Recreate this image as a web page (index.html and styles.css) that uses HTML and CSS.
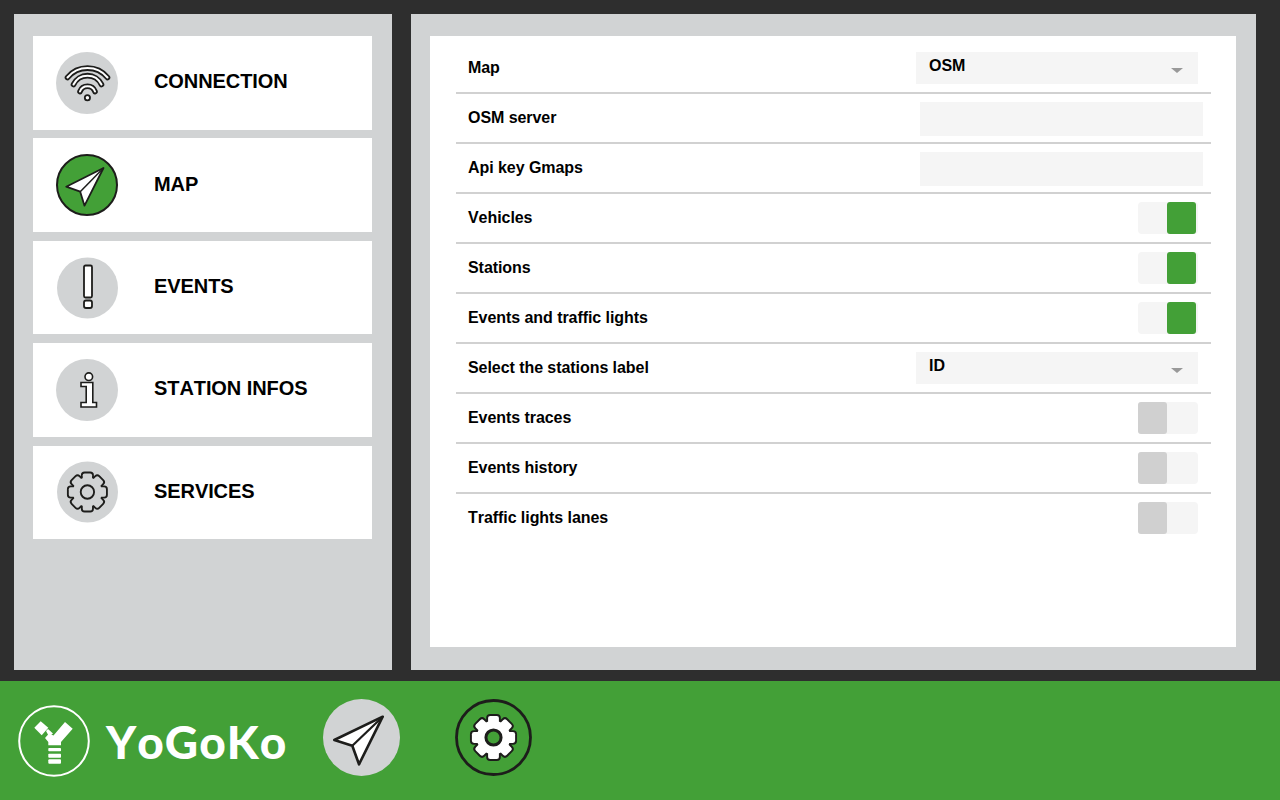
FILE: index.html
```html
<!DOCTYPE html>
<html lang="en">
  <head>
    <meta charset="UTF-8" />
    <meta name="viewport" content="width=device-width, initial-scale=1.0" />
    <title>YoGoKo settings</title>
    <link rel="stylesheet" href="styles.css">
  </head>
  <body>
    <svg class="defs" width="0" height="0">
      <defs>
        <g id="gear">
          <circle r="15.5" />
          <rect x="-5" y="-20" width="10" height="10" rx="2" />
          <rect x="-5" y="-20" width="10" height="10" rx="2" transform="rotate(45)" />
          <rect x="-5" y="-20" width="10" height="10" rx="2" transform="rotate(90)" />
          <rect x="-5" y="-20" width="10" height="10" rx="2" transform="rotate(135)" />
          <rect x="-5" y="-20" width="10" height="10" rx="2" transform="rotate(180)" />
          <rect x="-5" y="-20" width="10" height="10" rx="2" transform="rotate(225)" />
          <rect x="-5" y="-20" width="10" height="10" rx="2" transform="rotate(270)" />
          <rect x="-5" y="-20" width="10" height="10" rx="2" transform="rotate(315)" />
        </g>
      </defs>
    </svg>

    <main class="content">
      <nav class="sidebar">
        <a class="nav-item">
          <svg class="nav-icon" viewBox="0 0 62 62">
            <circle cx="31" cy="31" r="31" fill="#d1d3d4" />
            <g fill="none" stroke="#1d1d1b" stroke-width="5.6" stroke-linecap="round">
              <path d="M11.5 25.5A26 26 0 0 1 51.5 25.5" />
              <path d="M17.5 32.5A15.5 15.5 0 0 1 45.5 32.5" />
              <path d="M24 39.5A8 8 0 0 1 39 39.5" />
            </g>
            <g fill="none" stroke="#fff" stroke-width="2" stroke-linecap="round">
              <path d="M11.5 25.5A26 26 0 0 1 51.5 25.5" />
              <path d="M17.5 32.5A15.5 15.5 0 0 1 45.5 32.5" />
              <path d="M24 39.5A8 8 0 0 1 39 39.5" />
            </g>
            <circle cx="31.4" cy="45.7" r="2.6" fill="#fff" stroke="#1d1d1b" stroke-width="1.8" />
          </svg>
          <span>CONNECTION</span>
        </a>
        <a class="nav-item">
          <svg class="nav-icon" viewBox="0 0 62 62">
            <circle cx="31" cy="31" r="30" fill="#43a037" stroke="#1d1d1b" stroke-width="2" />
            <path d="M47.5 14L10.2 32.7L24.2 37.7L28.5 51.7Z" fill="#fff" stroke="#1d1d1b" stroke-width="1.8" stroke-linejoin="round" />
            <path d="M47.5 14L24.2 37.7" fill="none" stroke="#1d1d1b" stroke-width="1.5" />
          </svg>
          <span>MAP</span>
        </a>
        <a class="nav-item">
          <svg class="nav-icon" viewBox="0 0 62 62">
            <circle cx="31.5" cy="31" r="30.5" fill="#d1d3d4" />
            <rect x="28" y="8.5" width="8" height="32" rx="1.5" fill="#fff" stroke="#1d1d1b" stroke-width="1.8" />
            <rect x="28" y="43.5" width="8" height="7.5" rx="2" fill="#fff" stroke="#1d1d1b" stroke-width="1.8" />
          </svg>
          <span>EVENTS</span>
        </a>
        <a class="nav-item">
          <svg class="nav-icon" viewBox="0 0 62 62">
            <circle cx="31" cy="31" r="31" fill="#d1d3d4" />
            <circle cx="32.8" cy="17.7" r="3.8" fill="#fff" stroke="#1d1d1b" stroke-width="1.6" />
            <path d="M25 23.5H36.8V43.5H40.5V48H25V43.5H30.2V27.5H25Z" fill="#fff" stroke="#1d1d1b" stroke-width="1.6" />
          </svg>
          <span>STATION INFOS</span>
        </a>
        <a class="nav-item">
          <svg class="nav-icon" viewBox="0 0 62 62">
            <circle cx="31.5" cy="31" r="30.5" fill="#d1d3d4" />
            <g transform="translate(31.4 31) scale(0.93)">
              <use href="#gear" fill="#1d1d1b" stroke="#1d1d1b" stroke-width="4" />
              <use href="#gear" fill="#d1d3d4" />
              <circle r="7.2" fill="#d1d3d4" stroke="#1d1d1b" stroke-width="2" />
            </g>
          </svg>
          <span>SERVICES</span>
        </a>
      </nav>

      <section class="settings">
        <div class="settings-list">
          <div class="row">
            <span>Map</span>
            <div class="select"><span>OSM</span><i class="caret"></i></div>
          </div>
          <div class="row">
            <span>OSM server</span>
            <div class="input"></div>
          </div>
          <div class="row">
            <span>Api key Gmaps</span>
            <div class="input"></div>
          </div>
          <div class="row">
            <span>Vehicles</span>
            <div class="toggle on"><i class="thumb"></i></div>
          </div>
          <div class="row">
            <span>Stations</span>
            <div class="toggle on"><i class="thumb"></i></div>
          </div>
          <div class="row">
            <span>Events and traffic lights</span>
            <div class="toggle on"><i class="thumb"></i></div>
          </div>
          <div class="row">
            <span>Select the stations label</span>
            <div class="select"><span>ID</span><i class="caret"></i></div>
          </div>
          <div class="row">
            <span>Events traces</span>
            <div class="toggle"><i class="thumb"></i></div>
          </div>
          <div class="row">
            <span>Events history</span>
            <div class="toggle"><i class="thumb"></i></div>
          </div>
          <div class="row">
            <span>Traffic lights lanes</span>
            <div class="toggle"><i class="thumb"></i></div>
          </div>
        </div>
      </section>
    </main>

    <footer class="footer">
      <div class="brand">
        <svg class="brand-mark" viewBox="0 0 72 72">
          <circle cx="36" cy="36" r="34.8" fill="none" stroke="#fff" stroke-width="2" />
          <path d="M22.7 16.3L30.3 22.7L23.7 30.3L16.3 22.7Z" fill="#fff" />
          <path d="M28 26L30 24L35 28.5L31 31.5Z" fill="#fff" />
          <path d="M47 17L54.7 23.7L43 37V40.3H30.3V37L27 33L31 28.5L35.5 30.5Z" fill="#fff" />
          <rect x="30.3" y="43" width="12.7" height="3.3" rx="0.8" fill="#fff" />
          <rect x="30.3" y="48.7" width="12.7" height="4" rx="0.8" fill="#fff" />
          <rect x="30.3" y="54.3" width="12.7" height="4.4" rx="1" fill="#fff" />
        </svg>
        <span class="brand-name">YoGoKo</span>
      </div>
      <svg class="footer-icon plane" viewBox="0 0 77 77">
        <circle cx="38.5" cy="38.5" r="38.5" fill="#d1d3d4" />
        <path d="M59.7 17.7L11.3 41L29.3 46.7L36 65.3Z" fill="#fff" stroke="#1d1d1b" stroke-width="2.6" stroke-linejoin="round" />
        <path d="M59.7 17.7L29.3 46.7" fill="none" stroke="#1d1d1b" stroke-width="2.2" />
      </svg>
      <svg class="footer-icon cog" viewBox="0 0 77 77">
        <circle cx="38.5" cy="38.5" r="37" fill="none" stroke="#1d1d1b" stroke-width="2.8" />
        <g transform="translate(38.5 38.5) scale(1.08)">
          <use href="#gear" fill="#1d1d1b" stroke="#1d1d1b" stroke-width="3.6" />
          <use href="#gear" fill="#fff" />
          <circle r="7" fill="#43a037" stroke="#1d1d1b" stroke-width="2.8" />
        </g>
      </svg>
    </footer>
  </body>
</html>
```

FILE: styles.css
```css
* {
  box-sizing: border-box;
}
body {
  margin: 0;
  height: 800px;
  display: flex;
  flex-flow: column nowrap;
  background-color: #2e2e2e;
  font-family: "Liberation Sans", Arial, sans-serif;
  font-kerning: none;
  color: #000;
}
.defs {
  position: absolute;
}
.content {
  display: flex;
  height: 681px;
  padding: 14px 24px 11px 14px;
  gap: 19px;
}
.sidebar {
  display: flex;
  flex-flow: column nowrap;
  width: 378px;
  padding: 22px 20px 0 19px;
  gap: 8.9px;
  background-color: #d1d3d4;
}
.nav-item {
  display: flex;
  align-items: center;
  height: 93.5px;
  padding-left: 23px;
  gap: 36px;
  background-color: #fff;
  font-size: 20px;
  font-weight: 700;
  letter-spacing: -0.08px;
}
.nav-item span {
  margin-bottom: 2px;
}
.nav-icon {
  width: 62px;
  height: 62px;
  flex: none;
}
.settings {
  width: 845px;
  padding: 22px 20px 23px 19px;
  background-color: #d1d3d4;
}
.settings-list {
  height: 100%;
  padding: 8px 25px 0 26px;
  background-color: #fff;
}
.row {
  display: flex;
  align-items: center;
  justify-content: space-between;
  height: 50px;
  padding: 0 13px 0 12px;
  border-bottom: 2px solid #d1d1d1;
  font-size: 16px;
  font-weight: 700;
  letter-spacing: -0.06px;
}
.row > span {
  margin-bottom: 1px;
}
.row:last-child {
  border-bottom-color: transparent;
}
.select {
  position: relative;
  width: 282px;
  height: 32px;
  padding: 5px 13px;
  background-color: #f5f5f5;
}
.caret {
  position: absolute;
  top: 16px;
  right: 15px;
  border-top: 5px solid #999;
  border-left: 6px solid transparent;
  border-right: 6px solid transparent;
}
.input {
  width: 283px;
  height: 34px;
  margin: 2px -5px 0 0;
  background-color: #f5f5f5;
}
.toggle {
  display: flex;
  width: 60px;
  height: 32px;
  border-radius: 4px;
  background-color: #f5f5f5;
}
.toggle.on {
  justify-content: flex-end;
  padding-right: 2px;
}
.thumb {
  width: 29px;
  height: 32px;
  border-radius: 3px;
  background-color: #d0d0d0;
}
.toggle.on .thumb {
  background-color: #43a037;
}
.footer {
  display: flex;
  align-items: flex-start;
  height: 119px;
  padding: 18px 0 0 18px;
  background-color: #43a037;
}
.brand {
  display: flex;
  align-items: center;
  gap: 16px;
  width: 305px;
  margin-top: 6px;
}
.brand-mark {
  width: 72px;
  height: 72px;
  flex: none;
}
.brand-name {
  font-family: Lato, sans-serif;
  font-size: 46px;
  font-weight: 900;
  letter-spacing: 1px;
  color: #fff;
}
.footer-icon {
  width: 77px;
  height: 77px;
  flex: none;
}
.plane {
  margin-right: 55px;
}
```
